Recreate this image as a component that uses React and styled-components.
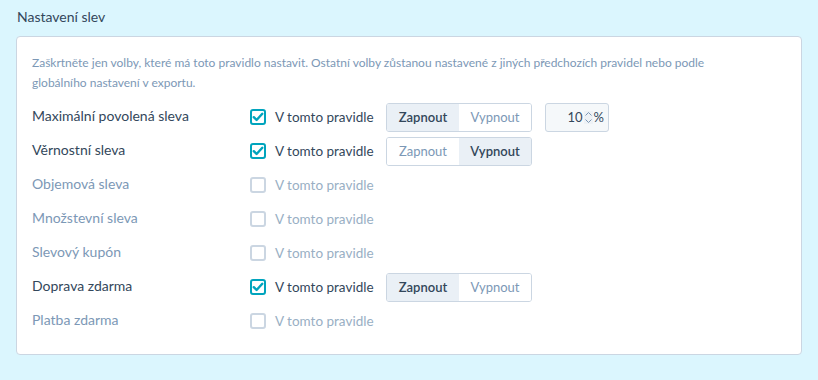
import styled, { createGlobalStyle } from 'styled-components'

const GlobalStyle = createGlobalStyle`
  body {
    margin: 0;
    background: #dbf6fe;
    font-family: Lato, "Open Sans", sans-serif;
  }
`

const rows = [
  { label: 'Maximální povolená sleva', checked: true, on: true, number: 10 },
  { label: 'Věrnostní sleva', checked: true, on: false },
  { label: 'Objemová sleva' },
  { label: 'Množstevní sleva' },
  { label: 'Slevový kupón' },
  { label: 'Doprava zdarma', checked: true, on: true },
  { label: 'Platba zdarma' },
]

const Check = ({ checked }) => (
  <Box checked={checked}>
    {checked && (
      <svg width="12" height="12" viewBox="0 0 12 12">
        <path d="M1.8 6.2 L4.6 9 L10.3 2.8" fill="none" stroke="#00a4bd" strokeWidth="2.4" strokeLinecap="round" strokeLinejoin="round" />
      </svg>
    )}
  </Box>
)

const App = () => {
  return (
    <Page>
      <GlobalStyle />
      <Heading>Nastavení slev</Heading>
      <Card>
        <Intro>
          Zaškrtněte jen volby, které má toto pravidlo nastavit. Ostatní volby zůstanou nastavené z jiných předchozích pravidel nebo podle
          globálního nastavení v exportu.
        </Intro>
        <List>
          {rows.map((r) => (
            <Row key={r.label}>
              <Label active={r.checked}>{r.label}</Label>
              <CheckWrap active={r.checked}>
                <Check checked={r.checked} />
                V tomto pravidle
              </CheckWrap>
              {r.checked && (
                <Segments>
                  <Segment selected={r.on}>Zapnout</Segment>
                  <Segment selected={!r.on}>Vypnout</Segment>
                </Segments>
              )}
              {r.number && (
                <NumberBox>
                  {r.number}
                  <Spinner>
                    <svg width="9" height="13" viewBox="0 0 9 13">
                      <path d="M1.5 4.5 L4.5 1.5 L7.5 4.5 M1.5 8.5 L4.5 11.5 L7.5 8.5" fill="none" stroke="#7c98b6" strokeWidth="1" />
                    </svg>
                  </Spinner>
                  %
                </NumberBox>
              )}
            </Row>
          ))}
        </List>
      </Card>
    </Page>
  )
}

export default App

const Page = styled.div`
  width: 818px;
  height: 380px;
  padding: 7px 16px 0 16px;
  box-sizing: border-box;
`

const Heading = styled.div`
  font-size: 14px;
  color: #33475b;
  line-height: 20px;
  padding-left: 1px;
  margin-bottom: 9px;
`

const Card = styled.div`
  background: #fff;
  border: 1px solid #cbd6e2;
  border-radius: 4px;
  height: 319px;
  box-sizing: border-box;
  padding: 16px 15px 0 15px;
`

const Intro = styled.div`
  font-size: 12px;
  line-height: 20px;
  color: #7c98b6;
  margin-bottom: 7px;
  padding-right: 60px;
`

const List = styled.div`
  display: flex;
  flex-direction: column;
`

const Row = styled.div`
  display: flex;
  align-items: center;
  height: 34px;
`

const Label = styled.div`
  width: 218px;
  font-size: 14px;
  padding-bottom: 3px;
  color: ${(p) => (p.active ? '#33475b' : '#7c98b6')};
`

const CheckWrap = styled.label`
  display: flex;
  align-items: center;
  gap: 9px;
  width: 136px;
  font-size: 13.5px;
  color: ${(p) => (p.active ? '#33475b' : '#99afc4')};
`

const Box = styled.span`
  width: 16px;
  height: 16px;
  box-sizing: border-box;
  border-radius: 3px;
  border: 2px solid ${(p) => (p.checked ? '#00a4bd' : '#cbd6e2')};
  background: #fff;
  display: flex;
  align-items: center;
  justify-content: center;
`

const Segments = styled.div`
  display: flex;
  height: 29px;
  border: 1px solid #cbd6e2;
  border-radius: 3px;
  overflow: hidden;
  box-sizing: border-box;
`

const Segment = styled.div`
  width: 72px;
  display: flex;
  align-items: center;
  justify-content: center;
  font-size: 13px;
  background: ${(p) => (p.selected ? '#eaf0f6' : '#fff')};
  color: ${(p) => (p.selected ? '#33475b' : '#7c98b6')};
  font-weight: ${(p) => (p.selected ? 600 : 400)};
`

const NumberBox = styled.div`
  margin-left: 13px;
  width: 64px;
  height: 29px;
  box-sizing: border-box;
  border: 1px solid #cbd6e2;
  border-radius: 3px;
  background: #f5f8fa;
  display: flex;
  align-items: center;
  justify-content: flex-end;
  padding-right: 4px;
  font-size: 13px;
  color: #33475b;
`

const Spinner = styled.span`
  display: flex;
  margin: 0 1px 0 1px;
  background: #eef2f6;
`
